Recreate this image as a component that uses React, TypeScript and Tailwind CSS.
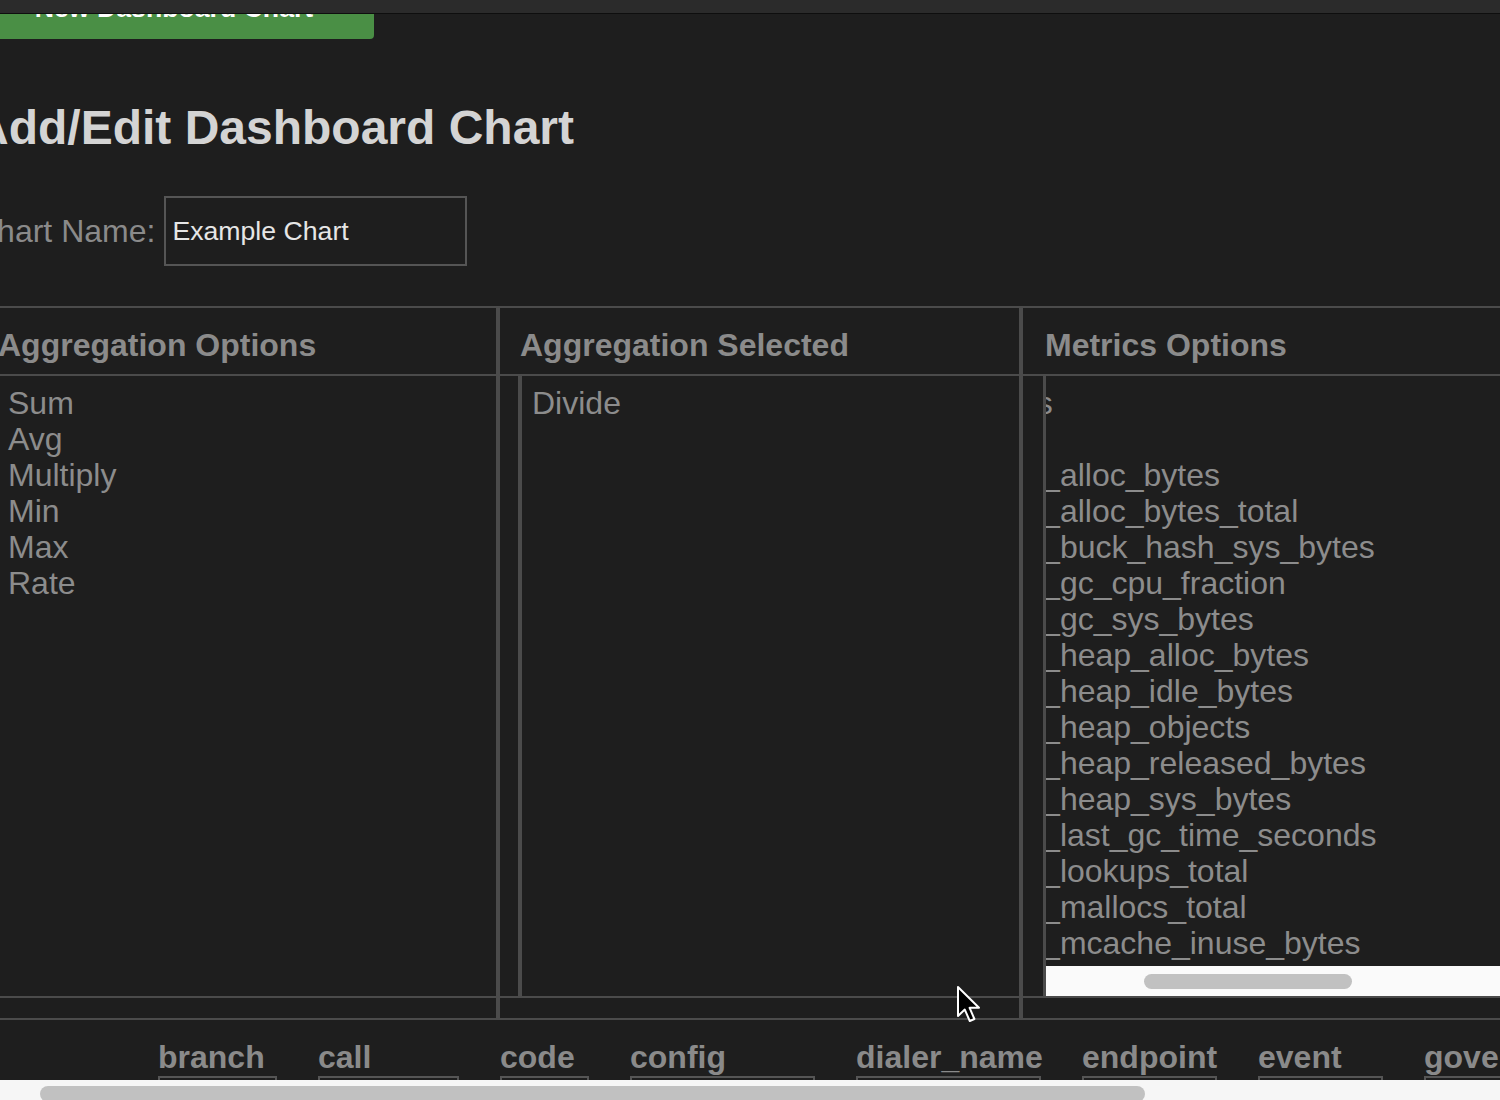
const aggregationOptions = ["Sum", "Avg", "Multiply", "Min", "Max", "Rate"];
const aggregationSelected = ["Divide"];

// full metric names, the list is scrolled sideways so the prefix is hidden
const metricsOptions = [
  "go_goroutines",
  "go_info",
  "go_memstats_alloc_bytes",
  "go_memstats_alloc_bytes_total",
  "go_memstats_buck_hash_sys_bytes",
  "go_memstats_gc_cpu_fraction",
  "go_memstats_gc_sys_bytes",
  "go_memstats_heap_alloc_bytes",
  "go_memstats_heap_idle_bytes",
  "go_memstats_heap_objects",
  "go_memstats_heap_released_bytes",
  "go_memstats_heap_sys_bytes",
  "go_memstats_last_gc_time_seconds",
  "go_memstats_lookups_total",
  "go_memstats_mallocs_total",
  "go_memstats_mcache_inuse_bytes",
];

const labelFields = [
  { name: "branch", width: "w-[119px]" },
  { name: "call", width: "w-[141px]" },
  { name: "code", width: "w-[89px]" },
  { name: "config", width: "w-[185px]" },
  { name: "dialer_name", width: "w-[185px]" },
  { name: "endpoint", width: "w-[135px]" },
  { name: "event", width: "w-[125px]" },
  { name: "governance", width: "w-[140px]" },
];

function ColumnHeader({ title, pad }: { title: string; pad: string }) {
  return (
    <div
      className={`h-[68px] border-b-2 border-[#4b4b4b] ${pad} pt-[19px] text-[32px] font-bold leading-[37px] text-[#8b8b8b] whitespace-nowrap`}
    >
      {title}
    </div>
  );
}

function ColumnFooter() {
  return (
    <>
      <div className="h-[2px] bg-[#4b4b4b]" />
      <div className="h-[22px] border-b-2 border-[#4b4b4b]" />
    </>
  );
}

function OptionList({ items }: { items: string[] }) {
  return (
    <ul className="pt-[9px] text-[32px] leading-[36px] text-[#8c8c8c]">
      {items.map((item) => (
        <li key={item} className="whitespace-nowrap">
          {item}
        </li>
      ))}
    </ul>
  );
}

function Cursor() {
  return (
    <svg
      className="absolute left-[956px] top-[985px]"
      width="26"
      height="38"
      viewBox="0 0 13 19"
    >
      <path
        d="M1 1 L1 15.5 L4.4 12.3 L6.9 18 L9.2 17 L6.8 11.4 L11.5 11.4 Z"
        fill="#000"
        stroke="#fff"
        strokeWidth="1"
        strokeLinejoin="round"
      />
    </svg>
  );
}

export default function App() {
  return (
    <div className="relative h-[1100px] w-[1500px] overflow-hidden bg-[#1e1e1e] font-['Liberation_Sans',Arial,sans-serif]">
      <div className="h-[14px] border-b border-[#0e0e0e] bg-[#2b2b2b]" />

      <div className="-ml-[26px]">
        <div className="h-[25px] w-[400px] overflow-hidden rounded-br-[4px] bg-[#4a8f45]">
          <div className="-mt-[21px] text-center text-[26.67px] font-bold leading-[31px] text-white whitespace-nowrap">
            New Dashboard Chart
          </div>
        </div>

        <h2 className="mt-[61px] text-[48px] font-bold leading-[56px] text-[#d4d4d4] whitespace-nowrap">
          Add/Edit Dashboard Chart
        </h2>

        <div className="mt-[40px] flex items-center gap-[9px]">
          <label className="text-[32px] leading-[37px] text-[#8a8a8a] whitespace-nowrap">
            Chart Name:
          </label>
          <input
            readOnly
            value="Example Chart"
            className="h-[70px] w-[303px] border-2 border-[#555] bg-transparent px-[6px] text-[26.67px] text-[#e6e6e6] outline-none"
          />
        </div>

        <div className="mt-[40px] flex border-t-2 border-[#4b4b4b]">
          <div className="w-[526px] shrink-0 border-r-4 border-[#4b4b4b]">
            <ColumnHeader title="Aggregation Options" pad="pl-[24px]" />
            <div className="h-[620px] pl-[20px]">
              <div className="h-full border-l-2 border-[#4b4b4b] pl-[12px]">
                <OptionList items={aggregationOptions} />
              </div>
            </div>
            <ColumnFooter />
          </div>

          <div className="w-[523px] shrink-0 border-r-4 border-[#4b4b4b]">
            <ColumnHeader title="Aggregation Selected" pad="pl-[20px]" />
            <div className="h-[620px] pl-[18px]">
              <div className="h-full border-l-4 border-[#4b4b4b] pl-[10px]">
                <OptionList items={aggregationSelected} />
              </div>
            </div>
            <ColumnFooter />
          </div>

          <div className="min-w-0 flex-1">
            <ColumnHeader title="Metrics Options" pad="pl-[22px]" />
            <div className="h-[620px] pl-[20px]">
              <div className="relative h-full overflow-hidden border-l-[3px] border-[#4b4b4b]">
                <div className="-ml-[196px]">
                  <OptionList items={metricsOptions} />
                </div>
                <div className="absolute bottom-0 left-0 right-0 h-[30px] bg-[#fafafa]">
                  <div className="absolute left-[98px] top-[8px] h-[15px] w-[208px] rounded-full bg-[#c1c1c1]" />
                </div>
              </div>
            </div>
            <ColumnFooter />
          </div>
        </div>

        <div className="mt-[19px] flex gap-[41px] pl-[184px]">
          {labelFields.map((field) => (
            <div key={field.name} className={`${field.width} shrink-0`}>
              <div className="text-[32px] font-bold leading-[37px] text-[#8a8a8a] whitespace-nowrap">
                {field.name}
              </div>
              <div className="h-[40px] border-2 border-[#555]" />
            </div>
          ))}
        </div>
      </div>

      <div className="absolute bottom-0 left-0 right-0 h-[20px] bg-[#f6f6f6]">
        <div className="absolute left-[40px] top-[6px] h-[16px] w-[1105px] rounded-full bg-[#c1c1c1]" />
      </div>

      <Cursor />
    </div>
  );
}
